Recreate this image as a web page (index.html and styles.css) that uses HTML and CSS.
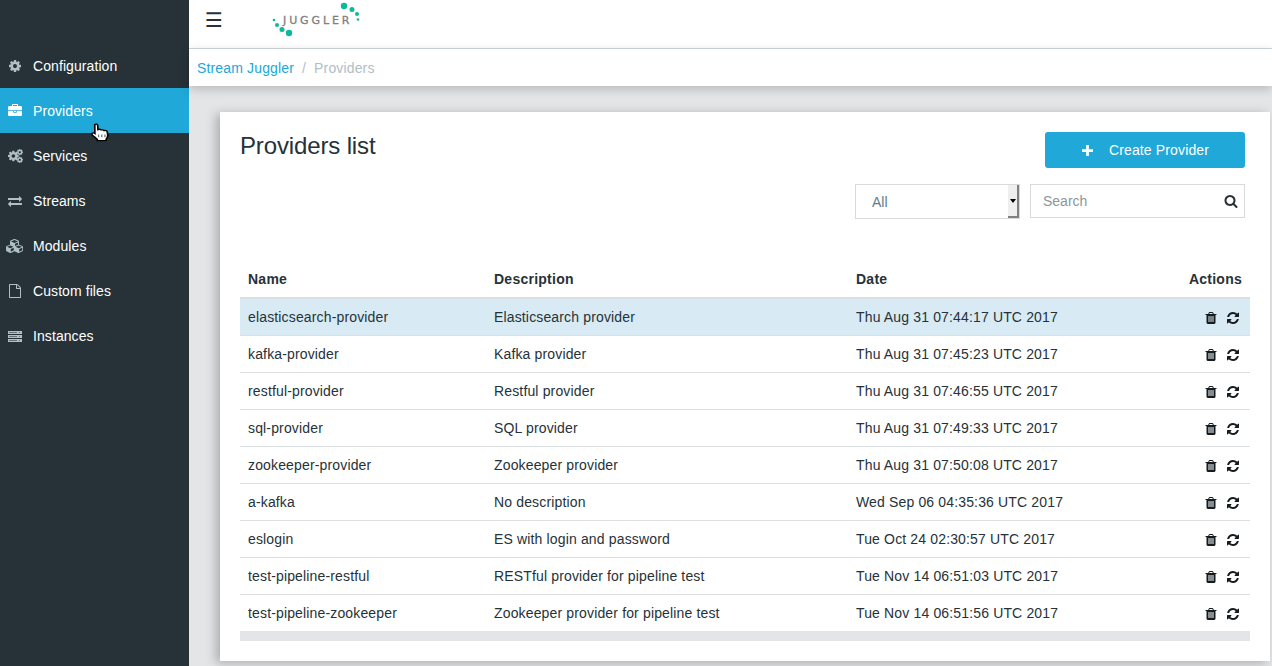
FILE: index.html
```html
<!DOCTYPE html>
<html lang="en">
<head>
<meta charset="utf-8">
<title>Providers list</title>
<link rel="stylesheet" href="styles.css">
</head>
<body>
<svg class="defs" width="0" height="0" aria-hidden="true">
  <symbol id="i-cog" viewBox="0 0 1792 1792"><path d="M1152 896q0-106-75-181t-181-75-181 75-75 181 75 181 181 75 181-75 75-181zm512-109v222q0 12-8 23t-20 13l-185 28q-19 54-39 91 35 50 107 138 10 12 10 25t-9 23q-27 37-99 108t-94 71q-12 0-26-9l-138-108q-44 23-91 38-16 136-29 186-7 28-36 28h-222q-14 0-24.5-8.5t-11.5-21.5l-28-184q-49-16-90-37l-141 107q-10 9-25 9-14 0-25-11-126-114-165-168-7-10-7-23 0-12 8-23 15-21 51-66.5t54-70.5q-27-50-41-99l-183-27q-13-2-21-12.5t-8-23.5v-222q0-12 8-23t19-13l186-28q14-46 39-92-40-57-107-138-10-12-10-24 0-10 9-23 26-36 98.5-107.5t94.5-71.5q13 0 26 10l138 107q44-23 91-38 16-136 29-186 7-28 36-28h222q14 0 24.5 8.5t11.5 21.5l28 184q49 16 90 37l142-107q9-9 24-9 13 0 25 10 129 119 165 170 7 8 7 22 0 12-8 23-15 21-51 66.5t-54 70.5q26 50 41 98l183 28q13 2 21 12.5t8 23.5z"/></symbol>
  <symbol id="i-trash" viewBox="0 0 1792 1792"><path d="M704 1376v-704q0-14-9-23t-23-9h-64q-14 0-23 9t-9 23v704q0 14 9 23t23 9h64q14 0 23-9t9-23zm256 0v-704q0-14-9-23t-23-9h-64q-14 0-23 9t-9 23v704q0 14 9 23t23 9h64q14 0 23-9t9-23zm256 0v-704q0-14-9-23t-23-9h-64q-14 0-23 9t-9 23v704q0 14 9 23t23 9h64q14 0 23-9t9-23zm-544-992h448l-48-117q-7-9-17-11h-317q-10 2-17 11zm928 32v64q0 14-9 23t-23 9h-96v948q0 83-47 143.5t-113 60.5h-832q-66 0-113-58.5t-47-141.5v-952h-96q-14 0-23-9t-9-23v-64q0-14 9-23t23-9h309l70-167q15-37 54-63t79-26h320q40 0 79 26t54 63l70 167h309q14 0 23 9t9 23z"/></symbol>
  <symbol id="i-refresh" viewBox="0 0 1792 1792"><path d="M1639 1056q0 5-1 7-64 268-268 434.5t-478 166.5q-146 0-282.5-55t-243.5-157l-129 129q-19 19-45 19t-45-19-19-45v-448q0-26 19-45t45-19h448q26 0 45 19t19 45-19 45l-137 137q71 66 161 102t187 36q134 0 250-65t186-179q11-17 53-117 8-23 30-23h192q13 0 22.5 9.5t9.5 22.5zm25-800v448q0 26-19 45t-45 19h-448q-26 0-45-19t-19-45 19-45l138-138q-148-137-349-137-134 0-250 65t-186 179q-11 17-53 117-8 23-30 23h-199q-13 0-22.5-9.5t-9.5-22.5v-7q65-268 270-434.5t480-166.5q146 0 284 55.5t245 156.5l130-129q19-19 45-19t45 19 19 45z"/></symbol>
</svg>

<aside class="sidebar">
  <nav class="nav">
    <a class="nav-item"><svg class="nav-icon"><use href="#i-cog"/></svg>Configuration</a>
    <a class="nav-item is-active"><svg class="nav-icon" viewBox="0 0 1792 1792"><path d="M640 256h512v-128h-512v128zm1152 640v480q0 66-47 113t-113 47h-1472q-66 0-113-47t-47-113v-480h672v160q0 26 19 45t45 19h320q26 0 45-19t19-45v-160h672zm-768 0v128h-256v-128h256zm768-480v384h-1792v-384q0-66 47-113t113-47h352v-160q0-40 28-68t68-28h576q40 0 68 28t28 68v160h352q66 0 113 47t47 113z"/></svg>Providers</a>
    <a class="nav-item"><svg class="nav-icon nav-icon-cogs" viewBox="0 0 1920 1792"><use href="#i-cog" x="-114" y="96" width="1600" height="1600"/><use href="#i-cog" x="1040" y="-68" width="950" height="950"/><use href="#i-cog" x="1040" y="910" width="950" height="950"/></svg>Services</a>
    <a class="nav-item"><svg class="nav-icon" viewBox="0 0 1792 1792"><path d="M1792 1184v192q0 13-9.5 22.5t-22.5 9.5h-1376v192q0 13-9.5 22.5t-22.5 9.5q-12 0-24-10l-319-320q-9-9-9-22 0-14 9-23l320-320q9-9 23-9 13 0 22.5 9.5t9.5 22.5v192h1376q13 0 22.5 9.5t9.5 22.5zm0-544q0 14-9 23l-320 320q-9 9-23 9-13 0-22.5-9.5t-9.5-22.5v-192h-1376q-13 0-22.5-9.5t-9.5-22.5v-192q0-13 9.5-22.5t22.5-9.5h1376v-192q0-14 9-23t23-9q12 0 24 10l319 319q9 9 9 23z"/></svg>Streams</a>
    <a class="nav-item"><svg class="nav-icon nav-icon-wide" viewBox="0 0 2176 1792"><path fill-rule="evenodd" d="M2176 1024v416q0 36-19 67t-52 47l-448 224q-25 14-57 14t-57-14l-448-224q-4-2-7-4-2 2-6 4l-448 224q-25 14-57 14t-57-14l-448-224q-33-16-52-47t-19-67v-416q0-38 21.500-70t56.500-48l434-186v-400q0-38 21.500-70t56.500-48l448-192q23-10 50-10t50 10l448 192q35 16 56.500 48t21.500 70v400l434 186q36 16 57 48t21 70zM608 1632l384-192v-314l-384 164zM544 1178l404-173-404-173-404 173zM1696 1632l384-192v-314l-384 164zM1632 1178l404-173-404-173-404 173zM1152 885l384-165v-266l-384 164zM1088 506l441-189-441-189-441 189z"/></svg>Modules</a>
    <a class="nav-item"><svg class="nav-icon" viewBox="0 0 1792 1792"><path d="M1596 380q28 28 48 76t20 88v1152q0 40-28 68t-68 28h-1344q-40 0-68-28t-28-68v-1600q0-40 28-68t68-28h896q40 0 88 20t76 48zm-444-244v376h376q-10-29-22-41l-313-313q-12-12-41-22zm384 1528v-1024h-416q-40 0-68-28t-28-68v-416h-768v1536h1280z"/></svg>Custom files</a>
    <a class="nav-item"><svg class="nav-icon" viewBox="0 0 14 14"><path d="M0 2h14v3H0zM0 6h14v3H0zM0 10h14v3H0z"/><path class="nav-icon-cut" d="M1 3h8v1H1zM1 7h8v1H1zM1 11h8v1H1zM11 3h1v1h-1zM11 7h1v1h-1zM11 11h1v1h-1z"/></svg>Instances</a>
  </nav>
</aside>

<div class="main">
  <header class="topbar">
    <span class="burger">☰</span>
    <div class="logo">
      <svg class="logo-dots" viewBox="0 0 96 40" width="96" height="40"><circle cx="4" cy="20" r="1.300"/><circle cx="7" cy="25" r="2"/><circle cx="12" cy="29.500" r="2.500"/><circle cx="19" cy="33" r="3.200"/><circle cx="74" cy="6" r="3.200"/><circle cx="82" cy="9.500" r="2.500"/><circle cx="87" cy="14" r="2"/><circle cx="88" cy="19.500" r="1.300"/></svg>
      <span class="logo-text">JUGGLER</span>
    </div>
  </header>
  <div class="crumbs"><a class="crumb-link">Stream Juggler</a><span class="crumb-sep">/</span><span class="crumb-current">Providers</span></div>
  <main class="content">
    <section class="card">
      <div class="card-head">
        <h1 class="title">Providers list</h1>
        <button class="create"><svg class="create-icon" viewBox="0 0 12 12"><path d="M4.500 0h3v4.500H12v3H7.500V12h-3V7.500H0v-3h4.500z"/></svg>Create Provider</button>
      </div>
      <div class="filters">
        <span class="select-wrap"><select class="filter-select"><option>All</option></select></span>
        <div class="search">
          <input class="search-input" placeholder="Search">
          <svg class="search-icon" viewBox="0 0 1792 1792"><path d="M1216 832q0-185-131.500-316.500t-316.500-131.500-316.500 131.500-131.500 316.500 131.500 316.500 316.500 131.500 316.500-131.500 131.500-316.500zm512 832q0 52-38 90t-90 38q-54 0-90-38l-343-342q-179 124-399 124-143 0-273.500-55.500t-225-150-150-225-55.500-273.500 55.500-273.500 150-225 225-150 273.500-55.500 273.500 55.500 225 150 150 225 55.500 273.500q0 220-124 399l343 343q37 37 37 90z"/></svg>
        </div>
      </div>
      <table class="list">
        <thead><tr><th class="c-name">Name</th><th class="c-desc">Description</th><th>Date</th><th class="c-act">Actions</th></tr></thead>
        <tbody>
          <tr class="is-selected"><td>elasticsearch-provider</td><td>Elasticsearch provider</td><td>Thu Aug 31 07:44:17 UTC 2017</td><td class="c-act"><svg class="act"><use href="#i-trash"/></svg><svg class="act"><use href="#i-refresh"/></svg></td></tr>
          <tr><td>kafka-provider</td><td>Kafka provider</td><td>Thu Aug 31 07:45:23 UTC 2017</td><td class="c-act"><svg class="act"><use href="#i-trash"/></svg><svg class="act"><use href="#i-refresh"/></svg></td></tr>
          <tr><td>restful-provider</td><td>Restful provider</td><td>Thu Aug 31 07:46:55 UTC 2017</td><td class="c-act"><svg class="act"><use href="#i-trash"/></svg><svg class="act"><use href="#i-refresh"/></svg></td></tr>
          <tr><td>sql-provider</td><td>SQL provider</td><td>Thu Aug 31 07:49:33 UTC 2017</td><td class="c-act"><svg class="act"><use href="#i-trash"/></svg><svg class="act"><use href="#i-refresh"/></svg></td></tr>
          <tr><td>zookeeper-provider</td><td>Zookeeper provider</td><td>Thu Aug 31 07:50:08 UTC 2017</td><td class="c-act"><svg class="act"><use href="#i-trash"/></svg><svg class="act"><use href="#i-refresh"/></svg></td></tr>
          <tr><td>a-kafka</td><td>No description</td><td>Wed Sep 06 04:35:36 UTC 2017</td><td class="c-act"><svg class="act"><use href="#i-trash"/></svg><svg class="act"><use href="#i-refresh"/></svg></td></tr>
          <tr><td>eslogin</td><td>ES with login and password</td><td>Tue Oct 24 02:30:57 UTC 2017</td><td class="c-act"><svg class="act"><use href="#i-trash"/></svg><svg class="act"><use href="#i-refresh"/></svg></td></tr>
          <tr><td>test-pipeline-restful</td><td>RESTful provider for pipeline test</td><td>Tue Nov 14 06:51:03 UTC 2017</td><td class="c-act"><svg class="act"><use href="#i-trash"/></svg><svg class="act"><use href="#i-refresh"/></svg></td></tr>
          <tr class="is-last"><td>test-pipeline-zookeeper</td><td>Zookeeper provider for pipeline test</td><td>Tue Nov 14 06:51:56 UTC 2017</td><td class="c-act"><svg class="act"><use href="#i-trash"/></svg><svg class="act"><use href="#i-refresh"/></svg></td></tr>
        </tbody>
      </table>
      <div class="list-foot"></div>
    </section>
  </main>
</div>

<svg class="cursor" width="23" height="19" viewBox="0 0 18 20" preserveAspectRatio="none"><path d="M4.500 1.500c1-.8 2.200-.3 2.300 1l.2 4.500c1-.6 2-.4 2.500.4.900-.5 1.900-.3 2.400.6 1-.4 2.200.1 2.400 1.300l.4 3.700c0 1.500-.5 2.900-1.300 4.200v1.300H6.500v-1.300c-1.200-1.500-2.700-3.200-4-4.800-.8-1-.1-2.300 1.200-2 .3.100.6.300.9.600z" fill="#fff" stroke="#000" stroke-width="1.300"/><path d="M7.500 12v3M10 12v3M12.500 12v3" stroke="#777" stroke-width="1" fill="none"/></svg>
</body>
</html>
```
FILE: styles.css
```css
* { box-sizing: border-box; }
html, body { height: 100%; }
body {
  margin: 0;
  display: flex;
  height: 666px;
  overflow: hidden;
  position: relative;
  background: #e4e5e6;
  color: #263238;
  font: 14px/20px "Liberation Sans", Arial, sans-serif;
  letter-spacing: .15px;
}
.defs { position: absolute; }

.sidebar { width: 189px; flex: none; background: #263238; padding-top: 43px; }
.nav { display: flex; flex-direction: column; }
.nav-item {
  display: flex;
  align-items: center;
  height: 45px;
  padding-left: 7px;
  color: #fff;
  white-space: nowrap;
  letter-spacing: .08px;
}
.nav-item.is-active { background: #20a8d8; }
.nav-icon { width: 14px; height: 14px; margin: 0 11px 0 1px; fill: #b0bec5; flex: none; }
.nav-icon-wide { width: 17px; margin: 0 10px 0 -1px; }
.nav-icon-cogs { width: 15px; margin: 0 10px 0 1px; }
.is-active .nav-icon { fill: #fff; }
.nav-icon-cut { fill: #263238; opacity: .55; }

.main { flex: 1; min-width: 0; display: flex; flex-direction: column; }
.topbar {
  height: 49px;
  flex: none;
  background: #fff;
  border-bottom: 1px solid #cfd8dc;
  display: flex;
  align-items: flex-start;
}
.burger {
  margin: 8px 0 0 16px;
  width: 65px;
  font: 20px/24px "DejaVu Sans", sans-serif;
  color: #263238;
}
.logo { position: relative; width: 96px; height: 40px; }
.logo-dots { display: block; fill: #0cb99a; }
.logo-text {
  position: absolute;
  left: 13px;
  top: 14px;
  font: 11px/14px "DejaVu Sans", sans-serif;
  letter-spacing: 2.9px;
  color: #808080;
  -webkit-text-stroke: .3px #808080;
}
.crumbs {
  height: 37px;
  flex: none;
  background: #fff;
  padding-left: 8px;
  display: flex;
  align-items: center;
  box-shadow: 0 3px 10px rgba(0,0,0,.2);
  position: relative;
}
.crumb-link { color: #20a8d8; }
.crumb-sep { color: #b0bec5; margin: 0 8px; }
.crumb-current { color: #b0bec5; }

.content { flex: 1; padding: 26px 2px 5px 31px; min-height: 0; }
.card {
  height: 100%;
  background: #fff;
  padding: 20px;
  box-shadow: -4px 2px 10px rgba(0,0,0,.25);
}
.card-head { display: flex; justify-content: space-between; align-items: flex-start; padding-right: 5px; }
.title { margin: 0; font-size: 24px; line-height: 28px; font-weight: 400; color: #263238; letter-spacing: -.14px; }
.create {
  width: 200px;
  height: 36px;
  border: 0;
  padding: 0 0 0 1px;
  border-radius: 3px;
  background: #20a8d8;
  color: #fff;
  font: inherit;
  letter-spacing: .14px;
  display: flex;
  align-items: center;
  justify-content: center;
  gap: 16px;
}
.create-icon { width: 11px; height: 11px; fill: #fff; }
.filters { display: flex; justify-content: flex-end; gap: 10px; margin-top: 16px; padding-right: 5px; align-items: flex-start; }
.select-wrap { position: relative; display: block; width: 165px; height: 35px; }
.select-wrap::after {
  content: "";
  position: absolute;
  top: 1px;
  right: 1px;
  bottom: 1px;
  width: 9px;
  background: #efefef;
  border-right: 2px solid #808080;
  border-bottom: 2px solid #808080;
  pointer-events: none;
}
.select-wrap::before {
  content: "";
  position: absolute;
  z-index: 1;
  top: 15px;
  right: 4px;
  border: 3px solid transparent;
  border-bottom: 0;
  border-top: 4px solid #000;
  pointer-events: none;
}
.filter-select {
  appearance: none;
  display: block;
  width: 100%;
  height: 100%;
  padding-left: 16px;
  background: #fff;
  border: 1px solid #d9d9d9;
  border-radius: 0;
  color: #607d8b;
  font: inherit;
}
.search { position: relative; width: 215px; height: 34px; }
.search-input {
  width: 100%;
  height: 100%;
  padding: 0 30px 0 12px;
  border: 1px solid #d9d9d9;
  font: inherit;
  letter-spacing: 0;
  color: #263238;
  outline: 0;
}
.search-input::placeholder { color: #8d969b; opacity: 1; }
.search-icon { position: absolute; right: 7px; top: 10px; width: 14px; height: 14px; fill: #263238; }

.list { width: 100%; border-collapse: collapse; margin-top: 42px; table-layout: fixed; }
.list th {
  height: 37px;
  padding: 0 8px 0;
  text-align: left;
  font-weight: 700;
  letter-spacing: .25px;
  border-bottom: 2px solid #dcdfe1;
}
.c-name { width: 246px; }
.c-desc { width: 362px; }
.list .c-act { width: 120px; text-align: right; }
.list td { height: 37px; padding: 0 8px; border-bottom: 1px solid #dcdfe1; white-space: nowrap; }
.list .is-last td { border-bottom: 0; }
.is-selected td { background: #d8ebf4; }
.list td.c-act { padding-right: 10px; }
.act { width: 14px; height: 14px; fill: #151b1e; vertical-align: middle; margin-left: 8px; }
.list-foot { height: 10px; background: #e4e5e6; }

.cursor { position: absolute; left: 89px; top: 123px; }
```
